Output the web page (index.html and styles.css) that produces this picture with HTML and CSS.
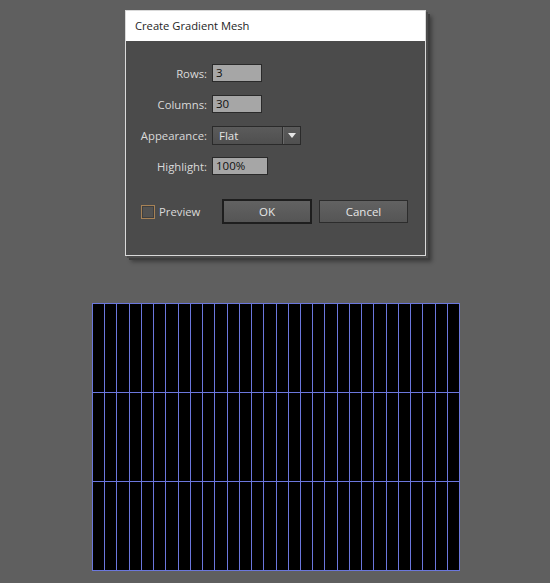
FILE: index.html
```html
<!DOCTYPE html>
<html>
<head>
<meta charset="utf-8">
<link rel="stylesheet" href="styles.css">
</head>
<body>
<div class="dialog">
  <div class="titlebar">Create Gradient Mesh</div>
  <div class="body">
    <div class="form">
      <span class="label">Rows:</span><div class="field w50">3</div>
      <span class="label">Columns:</span><div class="field w50">30</div>
      <span class="label">Appearance:</span>
      <div class="select"><span class="sel-text">Flat</span><span class="sel-btn"><svg width="8" height="5" viewBox="0 0 8 5"><path d="M0 0H8L4 5Z" fill="#e6e6e6"/></svg></span></div>
      <span class="label">Highlight:</span><div class="field w56">100%</div>
    </div>
    <div class="actions">
      <div class="check"><span class="box"></span><span>Preview</span></div>
      <button class="btn ok">OK</button>
      <button class="btn cancel">Cancel</button>
    </div>
  </div>
</div>
<svg class="mesh" width="368" height="268" viewBox="0 0 368 268">
  <rect x="0" y="0" width="368" height="268" fill="#000"/>
  <g stroke="#6b77dd" stroke-width="1" shape-rendering="crispEdges">
    <path d="M0.5 0V268M12.5 0V268M24.5 0V268M37.5 0V268M49.5 0V268M61.5 0V268M73.5 0V268M86.5 0V268M98.5 0V268M110.5 0V268M122.5 0V268M135.5 0V268M147.5 0V268M159.5 0V268M171.5 0V268M184.5 0V268M196.5 0V268M208.5 0V268M220.5 0V268M232.5 0V268M245.5 0V268M257.5 0V268M269.5 0V268M281.5 0V268M294.5 0V268M306.5 0V268M318.5 0V268M330.5 0V268M343.5 0V268M355.5 0V268M367.5 0V268"/>
    <path d="M0 0.5H368M0 89.5H368M0 178.5H368M0 267.5H368"/>
  </g>
</svg>
</body>
</html>
```

FILE: styles.css
```css
html, body {
  margin: 0;
  padding: 0;
  background: #5f5f5f;
  font-family: "Open Sans", "Liberation Sans", sans-serif;
}
body {
  width: 550px;
  height: 583px;
  overflow: hidden;
  display: flex;
  flex-direction: column;
}
.dialog {
  margin: 10px 0 0 125px;
  width: 299px;
  height: 244px;
  border: 1px solid #d9d9d9;
  background: #4b4b4b;
  box-shadow: 2px 2px 0 #4b4b4b, 4px 4px 0 #3d3d3d, 6px 6px 4px rgba(0,0,0,0.35);
  display: flex;
  flex-direction: column;
}
.titlebar {
  height: 30px;
  background: #ffffff;
  color: #1e1e1e;
  font-size: 11.2px;
  line-height: 30px;
  padding-left: 9px;
}
.body {
  padding-top: 23px;
}
.form {
  display: grid;
  grid-template-columns: 81px auto;
  grid-auto-rows: 18px;
  column-gap: 5px;
  row-gap: 13px;
  align-items: center;
  justify-items: start;
}
.label {
  justify-self: end;
  color: #dadada;
  font-size: 11.3px;
}
.field {
  box-sizing: border-box;
  height: 18px;
  background: #a6a6a6;
  border: 1px solid #2a2a2a;
  color: #111;
  font-size: 11.5px;
  line-height: 16px;
  padding-left: 3px;
}
.w50 { width: 50px; }
.w56 { width: 56px; }
.select {
  box-sizing: border-box;
  width: 89px;
  height: 19px;
  border: 1px solid #2a2a2a;
  background: linear-gradient(#5b5b5b, #4f4f4f);
  display: flex;
  align-items: center;
  color: #e4e4e4;
  font-size: 11.5px;
}
.sel-text {
  flex: 1;
  padding-left: 6px;
}
.sel-btn {
  width: 17px;
  height: 100%;
  border-left: 1px solid #2e2e2e;
  box-shadow: inset 1px 0 0 #6a6a6a;
  display: flex;
  align-items: center;
  justify-content: center;
}
.actions {
  margin-top: 24px;
  padding-left: 15px;
  display: grid;
  grid-template-columns: 74px 90px 89px;
  column-gap: 7px;
  align-items: center;
}
.check {
  display: flex;
  align-items: center;
  gap: 4px;
  color: #dadada;
  font-size: 11.3px;
}
.box {
  box-sizing: border-box;
  width: 14px;
  height: 14px;
  border: 1px solid #a78256;
  background: #525252;
  box-shadow: inset 0 0 0 1px #3e3e3e;
}
.btn {
  box-sizing: border-box;
  font-family: "Open Sans", "Liberation Sans", sans-serif;
  font-size: 11.5px;
  color: #e6e6e6;
  background: linear-gradient(#626262, #555555);
  padding: 0;
  margin: 0;
}
.ok {
  height: 25px;
  border: 2px solid #1e1e1e;
}
.cancel {
  height: 23px;
  border: 1px solid #2c2c2c;
}
.mesh {
  display: block;
  margin: 47px 0 0 92px;
}
```
